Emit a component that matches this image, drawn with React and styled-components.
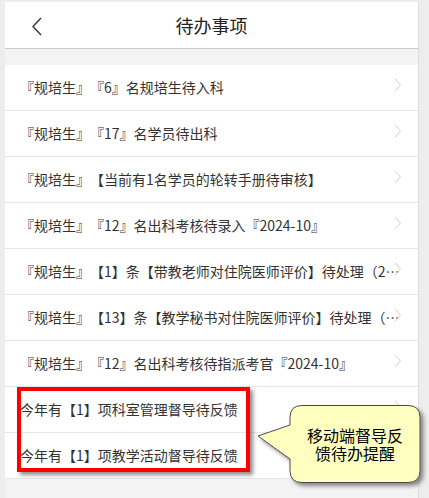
import React from 'react';
import styled, { createGlobalStyle } from 'styled-components';

const GlobalStyle = createGlobalStyle`
  html, body {
    margin: 0;
    padding: 0;
    background: #ededed;
  }
  body {
    font-family: "Noto Sans CJK SC", "Noto Sans", sans-serif;
    color: #333;
    text-spacing-trim: space-all;
    font-feature-settings: "chws" 0, "halt" 0;
  }
`;

const Page = styled.div`
  padding: 2px 10px 0 5px;
  height: 498px;
  box-sizing: border-box;
  overflow: hidden;
`;

const Panel = styled.div`
  position: relative;
  width: 414px;
  height: 496px;
  background: #f3f3f3;
  border-right: 1px solid #dcdcdc;
  box-sizing: border-box;
`;

const Header = styled.header`
  position: relative;
  height: 46px;
  background: #fff;
  border-bottom: 1px solid #cacaca;
  display: flex;
  align-items: center;
  justify-content: center;
`;

const BackButton = styled.span`
  position: absolute;
  left: 26px;
  top: 15px;
  display: flex;
`;

const Title = styled.h1`
  margin: 0;
  font-size: 18px;
  font-weight: normal;
  color: #222;
`;

const List = styled.ul`
  list-style: none;
  margin: 16px 0 0;
  padding: 0;
`;

const Row = styled.li`
  position: relative;
  height: 45px;
  background: #fff;
  border-bottom: 1px solid #e6e6e6;
  display: flex;
  align-items: center;
  padding: 0 14px 0 15px;
`;

const RowText = styled.span`
  font-size: 14px;
  color: #333;
  white-space: nowrap;
  overflow: hidden;
  text-overflow: ellipsis;
  margin-top: -2px;
`;

const Chevron = styled.span`
  position: absolute;
  right: 16px;
  top: 13px;
  display: flex;
`;

const Highlight = styled.div`
  position: absolute;
  left: 12px;
  top: 385px;
  width: 233px;
  height: 85px;
  box-sizing: border-box;
  border: 4px solid #ff0000;
  box-shadow: 3px 3px 4px rgba(0, 0, 0, 0.45);
`;

const Callout = styled.div`
  position: absolute;
  left: 245px;
  top: 398px;
  width: 175px;
  height: 88px;
`;

const CalloutText = styled.div`
  position: absolute;
  left: 40px;
  top: 5px;
  width: 130px;
  height: 77px;
  display: flex;
  align-items: center;
  justify-content: center;
  text-align: center;
  font-size: 16px;
  line-height: 18px;
  color: #000;
`;

const items = [
  '『规培生』『6』名规培生待入科',
  '『规培生』『17』名学员待出科',
  '『规培生』【当前有1名学员的轮转手册待审核】',
  '『规培生』『12』名出科考核待录入『2024-10』',
  '『规培生』【1】条【带教老师对住院医师评价】待处理（2024-10）',
  '『规培生』【13】条【教学秘书对住院医师评价】待处理（2024-10）',
  '『规培生』『12』名出科考核待指派考官『2024-10』',
  '今年有【1】项科室管理督导待反馈',
  '今年有【1】项教学活动督导待反馈',
];

export default function App() {
  return (
    <>
      <GlobalStyle />
      <Page>
        <Panel>
          <Header>
            <BackButton>
              <svg width="12" height="19" viewBox="0 0 12 19">
                <polyline points="10,1 2,9.5 10,18" fill="none" stroke="#333" strokeWidth="1.4" />
              </svg>
            </BackButton>
            <Title>待办事项</Title>
          </Header>
          <List>
            {items.map((t) => (
              <Row key={t}>
                <RowText>{t}</RowText>
                <Chevron>
                  <svg width="8" height="14" viewBox="0 0 8 14">
                    <polyline points="1,1 6.5,7 1,13" fill="none" stroke="#cfcfcf" strokeWidth="1" />
                  </svg>
                </Chevron>
              </Row>
            ))}
          </List>
          <Highlight />
          <Callout>
            <svg width="175" height="88" viewBox="0 0 175 88" style={{ position: 'absolute', left: 0, top: 0, overflow: 'visible' }}>
              <defs>
                <filter id="sh" x="-10%" y="-10%" width="130%" height="130%">
                  <feDropShadow dx="3" dy="3" stdDeviation="2" floodColor="#000" floodOpacity="0.45" />
                </filter>
              </defs>
              <path
                d="M52 5.5 H158 Q170 5.5 170 17.5 V70.5 Q170 82.5 158 82.5 H52 Q40 82.5 40 70.5 V59 L8 36 L40 25 V17.5 Q40 5.5 52 5.5 Z"
                fill="#ffffc0"
                stroke="#4a4a4a"
                strokeWidth="1"
                filter="url(#sh)"
              />
            </svg>
            <CalloutText>移动端督导反<br />馈待办提醒</CalloutText>
          </Callout>
        </Panel>
      </Page>
    </>
  );
}
